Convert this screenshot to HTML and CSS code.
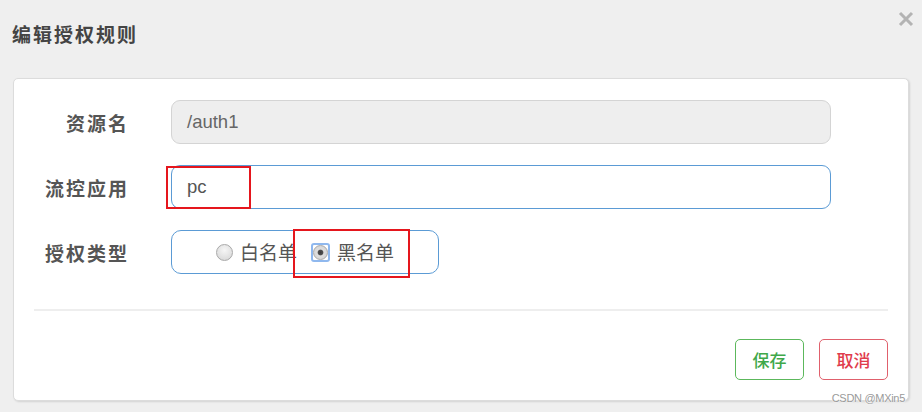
FILE: index.html
```html
<!DOCTYPE html>
<html lang="zh-CN">
<head>
<meta charset="utf-8">
<title>编辑授权规则</title>
<link rel="stylesheet" href="styles.css">
</head>
<body>
<div class="modal">
  <div class="modal-header">
    <h4 class="modal-title">编辑授权规则</h4>
    <button class="close" aria-label="关闭">
      <svg width="16" height="16" viewBox="0 0 16 16"><path d="M2 2L14 14M14 2L2 14" stroke="#b3b3b3" stroke-width="3" stroke-linecap="butt"/></svg>
    </button>
  </div>
  <div class="card">
    <form class="form">
      <div class="row">
        <label class="label">资源名</label>
        <div class="input disabled">/auth1</div>
      </div>
      <div class="row">
        <label class="label">流控应用</label>
        <div class="input focus">pc</div>
      </div>
      <div class="row">
        <label class="label">授权类型</label>
        <div class="radio-group">
          <span class="radio-item"><span class="radio"></span><span class="radio-text">白名单</span></span>
          <span class="radio-item"><span class="radio-ring"><span class="radio checked"></span></span><span class="radio-text">黑名单</span></span>
        </div>
      </div>
    </form>
    <div class="divider"></div>
    <div class="footer">
      <button class="btn btn-save">保存</button>
      <button class="btn btn-cancel">取消</button>
    </div>
  </div>
  <div class="mark mark-app"></div>
  <div class="mark mark-type"></div>
  <div class="watermark">CSDN @MXin5</div>
</div>
</body>
</html>
```
FILE: styles.css
```css
* { box-sizing: border-box; }
html, body {
  margin: 0;
  padding: 0;
  background: #efefef;
  width: 922px;
  height: 412px;
  overflow: hidden;
  font-family: "Liberation Sans", "Noto Sans CJK SC", sans-serif;
  color: #555;
}
.modal {
  position: relative;
  width: 922px;
  height: 412px;
}
.modal-header {
  display: flex;
  justify-content: space-between;
  align-items: flex-start;
  height: 78px;
  padding: 0 8px 0 12px;
}
.modal-title {
  margin: 21px 0 0 0;
  font-family: "Noto Sans CJK SC", sans-serif;
  font-size: 19px;
  font-weight: bold;
  line-height: 26px;
  color: #444;
  letter-spacing: 2px;
}
.close {
  margin-top: 11px;
  padding: 0;
  border: 0;
  background: none;
  width: 16px;
  height: 16px;
  display: block;
}
.close svg { display: block; }
.card {
  margin-left: 13px;
  width: 896px;
  height: 323px;
  background: #fff;
  border: 1px solid #dcdcdc;
  border-radius: 5px;
  box-shadow: 1px 1px 2px rgba(0,0,0,0.12);
  padding: 21px 20px 0 0;
}
.form {
  display: flex;
  flex-direction: column;
  gap: 21px;
}
.row {
  display: grid;
  grid-template-columns: 113px 660px;
  column-gap: 44px;
  align-items: center;
  height: 44px;
}
.label {
  text-align: right;
  font-family: "Noto Sans CJK SC", sans-serif;
  font-size: 19px;
  font-weight: bold;
  color: #555;
  letter-spacing: 2px;
  margin-right: -2px;
}
.input {
  height: 44px;
  border-radius: 9px;
  padding: 0 15px;
  display: flex;
  align-items: center;
  font-size: 18.5px;
  color: #555;
}
.input.disabled {
  background: #eee;
  border: 1px solid #d4d4d4;
  color: #666;
}
.input.focus {
  background: #fff;
  border: 1px solid #5b9bd5;
  color: #555;
}
.radio-group {
  width: 268px;
  height: 44px;
  border: 1px solid #5b9bd5;
  border-radius: 10px;
  display: flex;
  align-items: center;
  justify-content: center;
  gap: 14px;
}
.radio-item {
  display: flex;
  align-items: center;
  gap: 7px;
}
.radio {
  display: block;
  width: 17px;
  height: 17px;
  border-radius: 50%;
  border: 1px solid #a9a9a9;
  background: radial-gradient(circle at 50% 35%, #f6f6f6 0%, #dedede 70%, #cfcfcf 100%);
}
.radio-ring {
  display: flex;
  align-items: center;
  justify-content: center;
  width: 19px;
  height: 19px;
  border: 2px solid #8fb8ee;
  border-radius: 3px;
}
.radio.checked {
  width: 15px;
  height: 15px;
  background: radial-gradient(circle, #3c3c3c 0%, #505050 26%, #dedede 36%, #d0d0d0 100%);
}
.radio-text {
  font-family: "Noto Sans CJK SC", sans-serif;
  font-size: 19px;
  color: #555;
  line-height: 24px;
}
.divider {
  margin: 35px 0 0 20px;
  height: 2px;
  background: #eeeeee;
}
.footer {
  display: flex;
  justify-content: flex-end;
  gap: 15px;
  margin-top: 28px;
}
.btn {
  width: 69px;
  height: 41px;
  border-radius: 5px;
  background: #fff;
  font-family: "Noto Sans CJK SC", sans-serif;
  font-size: 17px;
  font-weight: 500;
  padding: 0;
}
.btn-save {
  border: 1px solid #5cb85c;
  color: #3fa84a;
}
.btn-cancel {
  border: 1px solid #e0606c;
  color: #e03c4c;
}
.mark {
  position: absolute;
  border: 2px solid #e5161d;
}
.mark-app {
  left: 166px;
  top: 166px;
  width: 85px;
  height: 43px;
}
.mark-type {
  left: 293px;
  top: 229px;
  width: 117px;
  height: 49px;
}
.watermark {
  position: absolute;
  right: 17px;
  top: 391px;
  font-family: "Liberation Sans", sans-serif;
  font-size: 11px;
  letter-spacing: -0.3px;
  line-height: 14px;
  color: #9a9a9a;
  text-shadow: 0 0 2px #fff, 0 0 2px #fff;
}
```
